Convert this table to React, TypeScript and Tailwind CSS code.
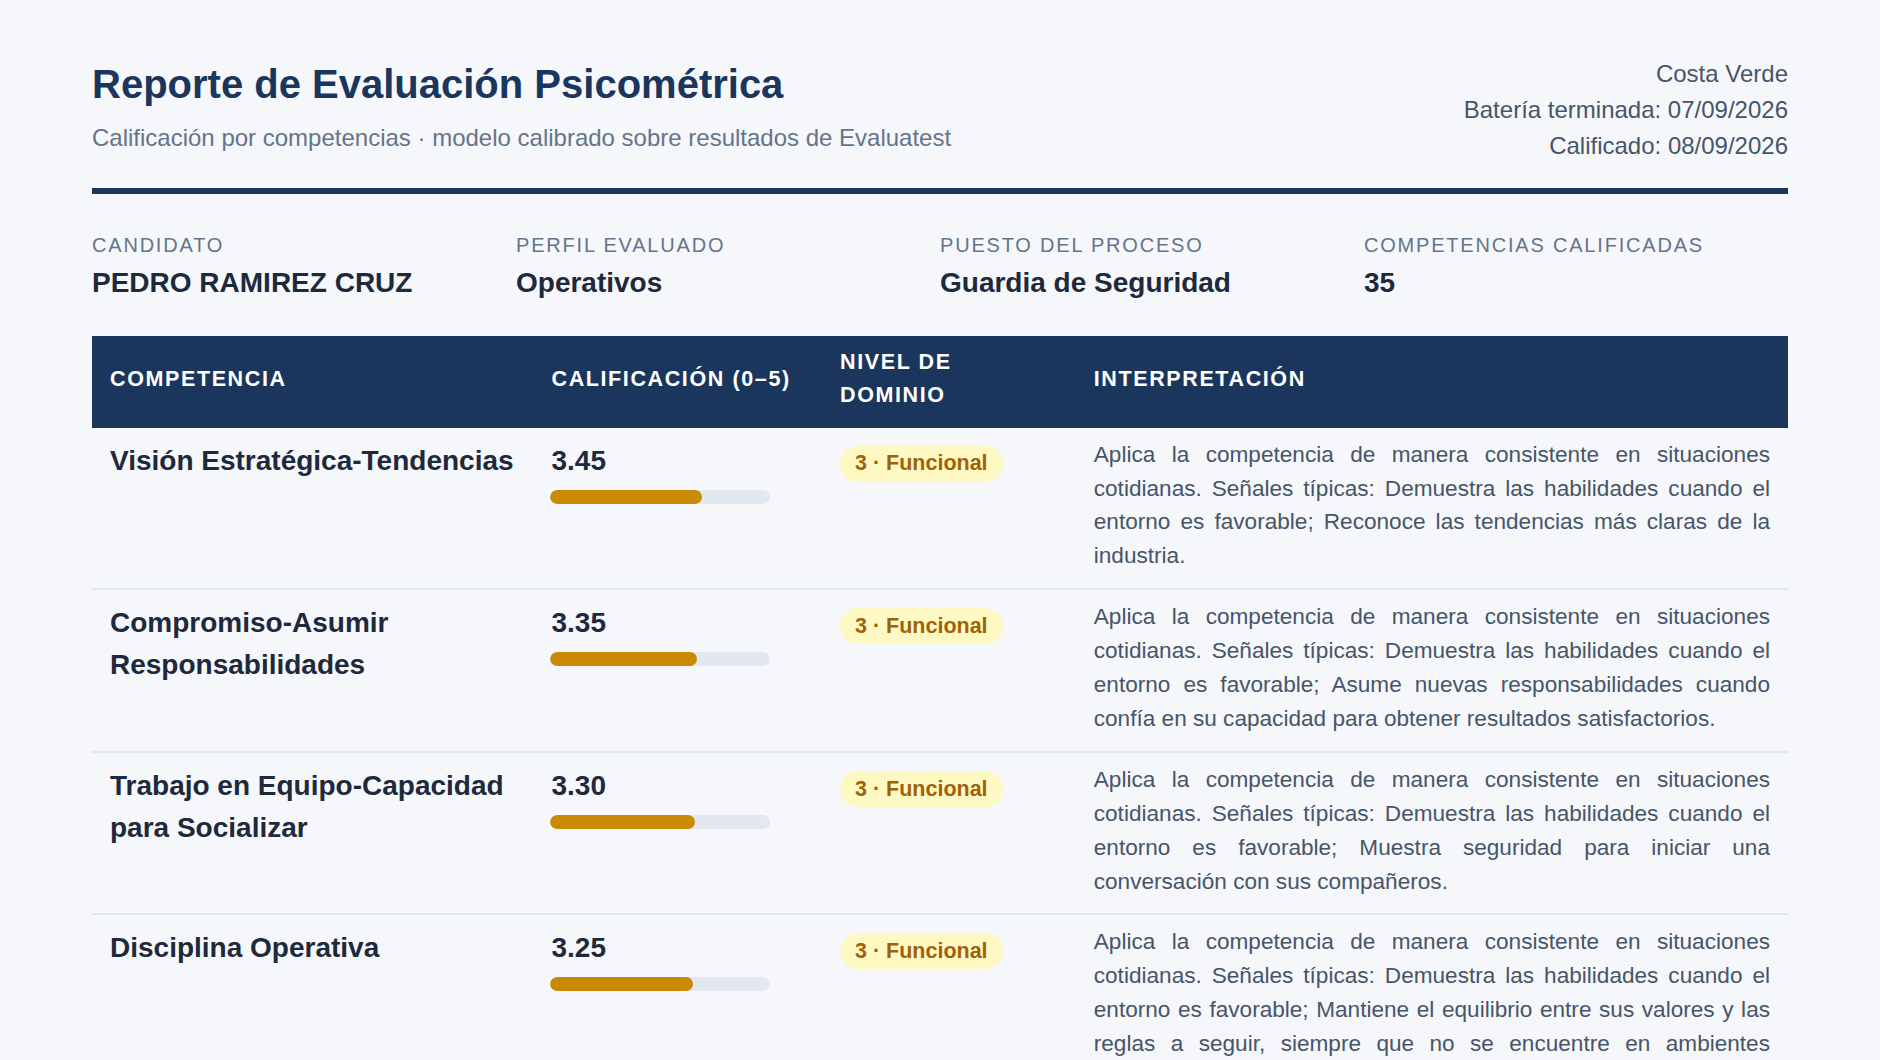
import React from "react";

type Row = { name: string; score: number; text: string };

const base =
  "Aplica la competencia de manera consistente en situaciones cotidianas. Señales típicas: Demuestra las habilidades cuando el entorno es favorable; ";

const rows: Row[] = [
  {
    name: "Visión Estratégica-Tendencias",
    score: 3.45,
    text: base + "Reconoce las tendencias más claras de la industria.",
  },
  {
    name: "Compromiso-Asumir Responsabilidades",
    score: 3.35,
    text:
      base +
      "Asume nuevas responsabilidades cuando confía en su capacidad para obtener resultados satisfactorios.",
  },
  {
    name: "Trabajo en Equipo-Capacidad para Socializar",
    score: 3.3,
    text: base + "Muestra seguridad para iniciar una conversación con sus compañeros.",
  },
  {
    name: "Disciplina Operativa",
    score: 3.25,
    text:
      base +
      "Mantiene el equilibrio entre sus valores y las reglas a seguir, siempre que no se encuentre en ambientes adversos.",
  },
];

const meta = [
  { label: "CANDIDATO", value: "PEDRO RAMIREZ CRUZ" },
  { label: "PERFIL EVALUADO", value: "Operativos" },
  { label: "PUESTO DEL PROCESO", value: "Guardia de Seguridad" },
  { label: "COMPETENCIAS CALIFICADAS", value: "35" },
];

const cols = "grid grid-cols-[441.5px_288.5px_253.75px_1fr]";

export default function App() {
  return (
    <div
      className="min-h-screen bg-[#f5f7fa] px-[92px] pt-[56px] pb-10"
      style={{ fontFamily: '"Liberation Sans", Arial, sans-serif' }}
    >
      {/* Header */}
      <header className="flex items-start justify-between border-b-[6px] border-[#1b365d] pb-6">
        <div>
          <h1 className="text-[40px] font-bold leading-[56px] text-[#1b365d]">
            Reporte de Evaluación Psicométrica
          </h1>
          <p className="mt-2 text-[24px] leading-[36px] text-[#64748b]">
            Calificación por competencias · modelo calibrado sobre resultados de Evaluatest
          </p>
        </div>
        <div className="text-right text-[24px] leading-[36px] text-[#475569]">
          <div>Costa Verde</div>
          <div>Batería terminada: 07/09/2026</div>
          <div>Calificado: 08/09/2026</div>
        </div>
      </header>

      {/* Meta */}
      <section className="grid grid-cols-4 pt-9">
        {meta.map((m) => (
          <div key={m.label}>
            <div className="text-[20px] leading-[30px] tracking-[0.09em] text-[#64748b]">
              {m.label}
            </div>
            <div className="mt-[2px] text-[28px] font-bold leading-[42px] text-[#1e293b]">
              {m.value}
            </div>
          </div>
        ))}
      </section>

      {/* Table */}
      <section className="mt-8">
        <div
          className={`${cols} items-center bg-[#1b365d] text-[21.5px] font-bold leading-[33.3px] tracking-[0.075em] text-white`}
        >
          <div className="px-[18px] pt-[10px] pb-[15px]">COMPETENCIA</div>
          <div className="px-[18px] pt-[10px] pb-[15px]">CALIFICACIÓN (0–5)</div>
          <div className="px-[18px] pt-[10px] pb-[15px]">NIVEL DE DOMINIO</div>
          <div className="px-[18px] pt-[10px] pb-[15px]">INTERPRETACIÓN</div>
        </div>

        {rows.map((r) => (
          <div
            key={r.name}
            className={`${cols} items-start border-b-2 border-[#e2e8f0]`}
          >
            <div className="pl-[18px] pr-[6px] pt-[12px] text-[28px] font-bold leading-[42px] text-[#1e293b]">
              {r.name}
            </div>
            <div className="px-[18px] pt-[12px]">
              <div className="text-[28px] font-bold leading-[42px] text-[#1e293b]">
                {r.score.toFixed(2)}
              </div>
              <div className="ml-[-1.5px] mt-[8px] h-[14px] w-[220px] overflow-hidden rounded-full bg-[#e2e8f0]">
                <div
                  className="h-full rounded-full bg-[#ca8a04]"
                  style={{ width: `${(r.score / 5) * 100}%` }}
                />
              </div>
            </div>
            <div className="px-[18px] pt-[18px]">
              <span className="inline-flex h-[36px] items-center rounded-full bg-[#fef9c3] px-[15px] text-[21.5px] font-bold text-[#a16207]">
                3 · Funcional
              </span>
            </div>
            <div className="px-[18px] pt-[10px] pb-[15px] text-justify text-[22.6px] leading-[33.9px] text-[#475569]">
              {r.text}
            </div>
          </div>
        ))}
      </section>
    </div>
  );
}
